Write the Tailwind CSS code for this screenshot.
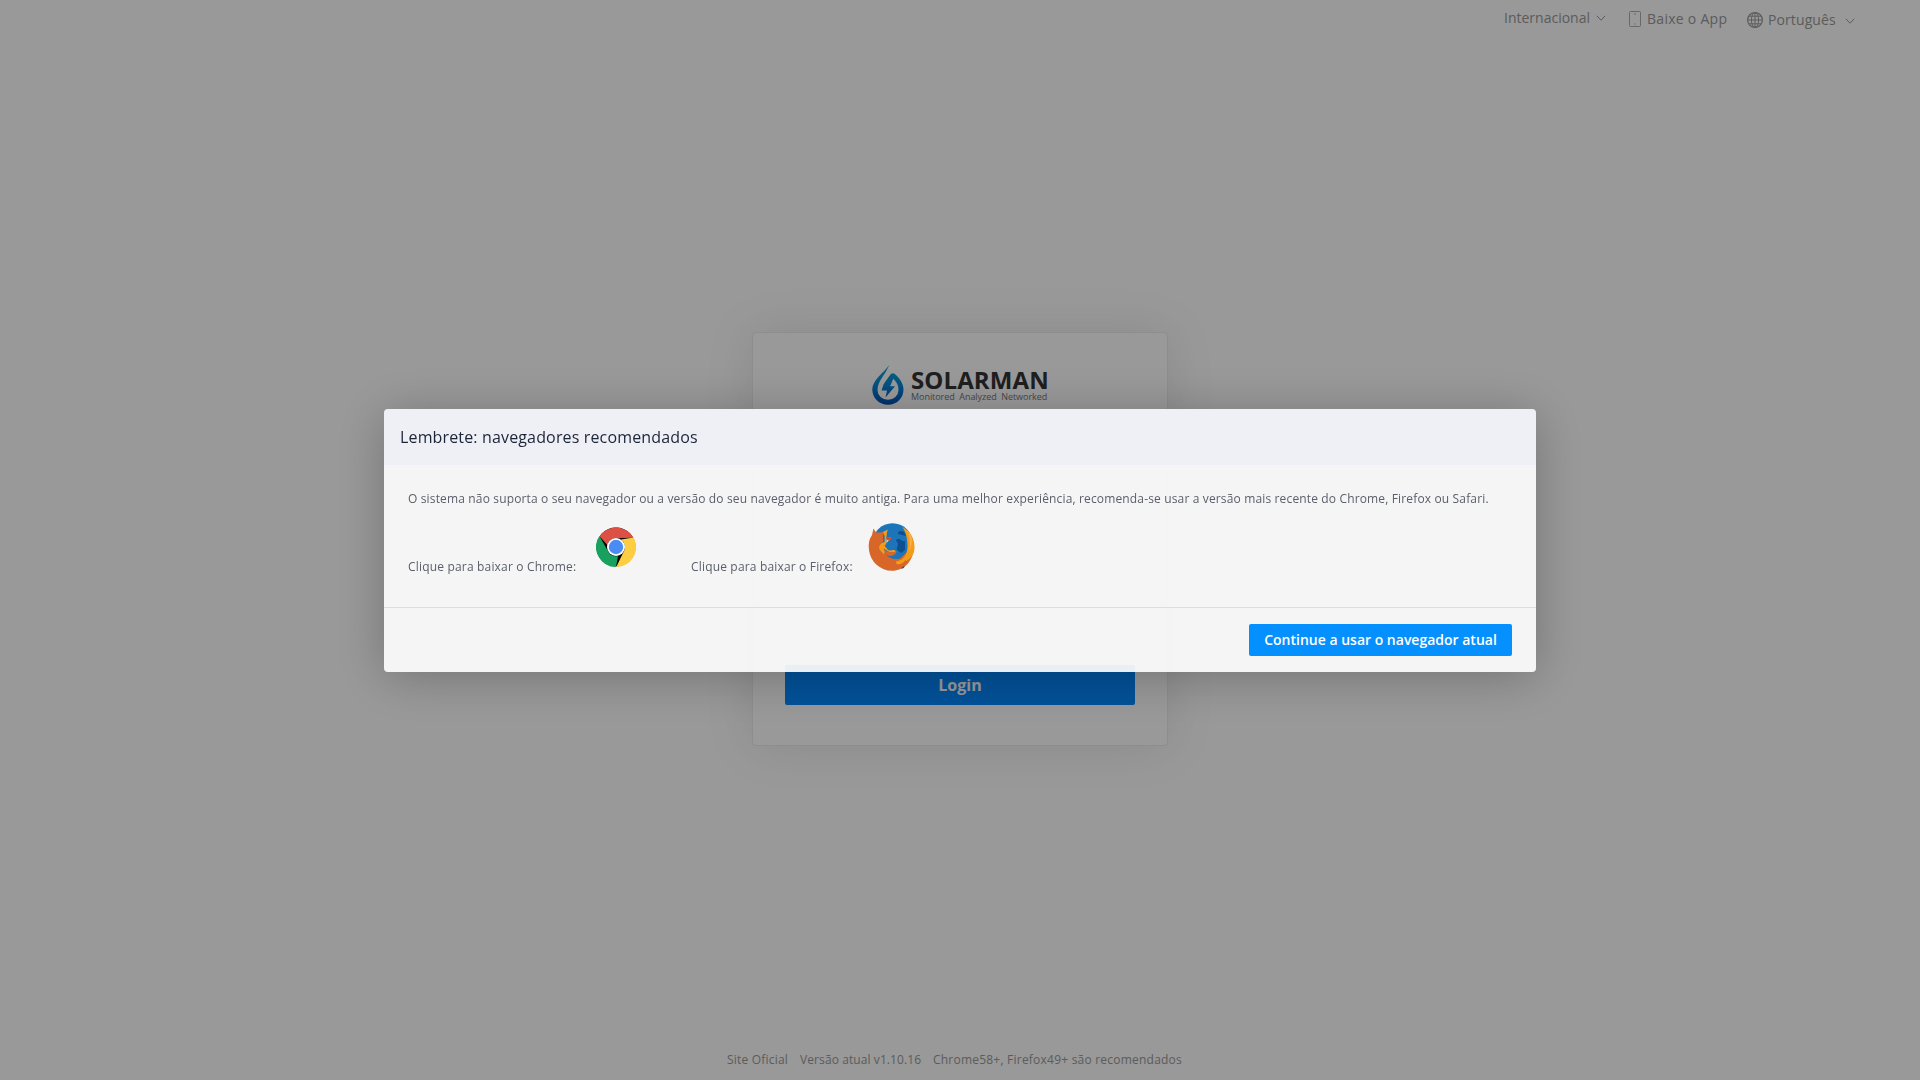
<!DOCTYPE html>
<html lang="pt">
<head>
<meta charset="utf-8">
<title>SOLARMAN</title>
<script src="https://cdn.jsdelivr.net/npm/@tailwindcss/browser@4"></script>
</head>
<body class="h-screen overflow-hidden bg-white font-['Open_Sans','Noto_Sans',sans-serif]">
<div class="flex h-full flex-col items-center">
  <header class="flex h-10 w-full items-start justify-end pr-[65px] text-sm leading-5 text-[#999]">
    <div class="flex items-center pt-2">
      <span class="w-[86px] whitespace-nowrap">Internacional</span>
      <svg class="ml-1.5 h-2.5 w-2.5" viewBox="0 0 10 10" fill="none" stroke="currentColor"><path d="M.8 2.8 5 7.2 9.2 2.8"/></svg>
    </div>
    <div class="ml-[23px] flex items-center pt-[9px]">
      <svg class="h-4 w-3" viewBox="0 0 12 16" fill="none" stroke="currentColor" stroke-width=".8"><rect x=".5" y=".5" width="11" height="15" rx="1"/><path d="M5 3h2M5.300 13h1.400"/></svg>
      <span class="ml-1.5 w-[81px] whitespace-nowrap tracking-[.28px]">Baixe o App</span>
    </div>
    <div class="ml-[19px] flex items-center pt-2.5">
      <svg class="h-4 w-4" viewBox="0 0 16 16" fill="none" stroke="currentColor"><circle cx="8" cy="8" r="7.400" stroke-width="1.200"/><ellipse cx="8" cy="8" rx="3.600" ry="7.400"/><path d="M8 .6v14.800M.6 8h14.800M2 4.200h12M2 11.800h12"/></svg>
      <span class="ml-[5px] w-[68px] whitespace-nowrap tracking-[.1px]">Português</span>
      <svg class="ml-[9px] mt-0.5 h-2.5 w-2.5" viewBox="0 0 10 10" fill="none" stroke="currentColor"><path d="M.8 2.8 5 7.2 9.2 2.8"/></svg>
    </div>
  </header>

  <main class="mt-[292px] flex h-[414px] w-[416px] flex-col items-center justify-between rounded border border-[#ececec] bg-white px-8 pt-8 pb-10 shadow-[0_0_50px_rgba(0,0,0,0.1)]">
    <div class="flex h-10 w-[176px]">
      <svg class="h-10 w-8 shrink-0" viewBox="0 0 32 40">
        <defs><linearGradient id="drop" x1="0" y1="0" x2="0" y2="40" gradientUnits="userSpaceOnUse"><stop offset="0" stop-color="#10a8c8"/><stop offset=".5" stop-color="#0788dc"/><stop offset="1" stop-color="#004fb0"/></linearGradient></defs>
        <path fill="url(#drop)" d="M17.300 0C12 7.500 .3 15 .3 24.500C.3 33 7 39.800 16 39.800S31.500 33 31.500 24.500C31.500 18 27.500 13 22.800 8.900Q20.500 7.200 18.800 9.300L11.500 19.500L20.800 13.600C25 17.300 26.500 20.500 26.500 25A10.500 9.800 0 0 1 5.500 25C5.500 16.500 12.800 10.500 17.300 0Z"/>
        <path fill="url(#drop)" d="M18.800 9.300 11.500 19.500 9.500 25.500H15L13.500 32.500 23 21.200H18.200L21.300 13.500Z"/>
      </svg>
      <div class="ml-[7px] flex flex-col whitespace-nowrap pt-1">
        <span class="h-[22px] text-2xl leading-[22px] font-bold tracking-[.1px] text-[#333]">SOLARMAN</span>
        <span class="w-[137px] pt-px text-[9px] leading-[10px] tracking-[-.05px] text-[#777]">Monitored&nbsp; Analyzed&nbsp; Networked</span>
      </div>
    </div>
    <button class="h-10 w-[350px] rounded-[2px] bg-[#0288ff] pb-px text-base font-bold text-white">Login</button>
  </main>

  <footer class="mt-auto flex h-10 w-full items-center gap-3 pl-[727px] text-xs text-[#999]">
    <span class="w-[61px] whitespace-nowrap tracking-[.2px]">Site Oficial</span>
    <span class="w-[121px] whitespace-nowrap tracking-[.09px]">Versão atual v1.10.16</span>
    <span class="whitespace-nowrap tracking-[.22px]">Chrome58+, Firefox49+ são recomendados</span>
  </footer>
</div>

<div class="fixed inset-0 flex items-center justify-center bg-black/40">
  <section class="flex h-[263px] w-[1152px] flex-col overflow-hidden rounded shadow-[0_5px_50px_rgba(0,0,0,0.25)]">
    <h2 class="h-14 bg-[#eff0f5] px-4 text-base leading-[57px] tracking-[.15px] text-[#1c2438]">Lembrete: navegadores recomendados</h2>
    <div class="flex-1 bg-[#fdfdfd]/92 px-6 pt-6 text-xs text-[#5b5e6b]">
      <p class="leading-5 whitespace-nowrap tracking-[.148px]">O sistema não suporta o seu navegador ou a versão do seu navegador é muito antiga. Para uma melhor experiência, recomenda-se usar a versão mais recente do Chrome, Firefox ou Safari.</p>
      <div class="mt-3.5 flex">
        <div class="flex w-[283px] items-end">
          <span class="w-[188px] pb-px leading-5 whitespace-nowrap tracking-[.18px]">Clique para baixar o Chrome:</span>
          <svg class="mb-[11px] h-10 w-10" viewBox="0 0 40 40">
            <circle cx="20" cy="20" r="19.500" fill="#000"/>
            <path fill="#dd5144" d="M3.500 9.300A20 20 0 0 1 37.500 10.800L20 11.200A9 9 0 0 0 11.300 18Z"/>
            <path fill="#17a05e" d="M3.400 9A20 20 0 0 0 20 40L22 29A9 9 0 0 1 12.200 24.500Z"/>
            <path fill="#ffcd42" d="M37.600 10.500A20 20 0 0 1 20.300 40L27.500 25A9 9 0 0 0 25 12.600Z"/>
            <circle cx="20" cy="20" r="9" fill="#fff"/><circle cx="20" cy="20" r="7.200" fill="#4b8bf4"/>
          </svg>
        </div>
        <div class="flex items-end">
          <span class="w-[177px] pb-px leading-5 whitespace-nowrap tracking-[.17px]">Clique para baixar o Firefox:</span>
          <svg class="mb-[7px] h-12 w-12" viewBox="0 0 48 48">
            <circle cx="24.500" cy="20.500" r="20.300" fill="#1c75b9"/>
            <path fill="#0e4f91" d="M30 9c3-2 5-1 7 1l1 3-4-1-4-1Zm-2 8c2-2 5-1 6 1l3 0v9l-4 3-4-3c-1-2 1-4 1-6s-2-2-2-4Z"/>
            <path fill="#d96629" d="M5.500 5.500 8 9.500H13l4-1-2 3v7l-2 4 3 7c5 6 10 7.500 16 6l14-13C46 38 36 47.800 24 47.800A23.500 23.500 0 0 1 1 27C.2 21 1 16 4 12Z"/>
            <path fill="#f59b1a" d="m20 6.600-5 2.400 1.600 4v6c-4 1.500-6.500 4-5 7.500l4.400 5 1-3-1.500-3 6.500 4c3 1 5-1 6-1-2-3-5 0-8-1.500l-3.500-4.500 1.800-1.500V15l.7-6Z"/>
            <path fill="#d96629" d="M16 27 21 29h6l2-1c-2 5-6 6-11 4Z"/>
            <path fill="#f3dcc0" d="m18.500 20 4-4.500-4-.5Z"/><path fill="#d34f2b" d="M18 14h5.500l-1 3.500-4-.5Z"/>
            <path fill="#f59b1a" d="M34.500 4C42 8 46.500 15 46.500 24c0 7-3 11-8 14l-1-1c-3 4-6 5-9 4l-.5-2.500c8-1 11.500-8 11.500-15 0-7-1-13-5-19.500Z"/>
            <path fill="#fbb04c" d="M38.500 7c4 7 4 13 2.500 22 3-6 4-15 1-18Z"/>
            <path fill="#1c4f80" d="M33 45.500l2-2h2l-2 2Z"/>
          </svg>
        </div>
      </div>
    </div>
    <div class="flex h-[65px] items-center justify-end border-t border-[#dcdee2] bg-[#fdfdfd]/92 bg-clip-padding px-6">
      <button class="h-8 w-[263px] rounded-[2px] bg-[#0590ff] text-sm font-semibold whitespace-nowrap text-white">Continue a usar o navegador atual</button>
    </div>
  </section>
</div>
</body>
</html>
